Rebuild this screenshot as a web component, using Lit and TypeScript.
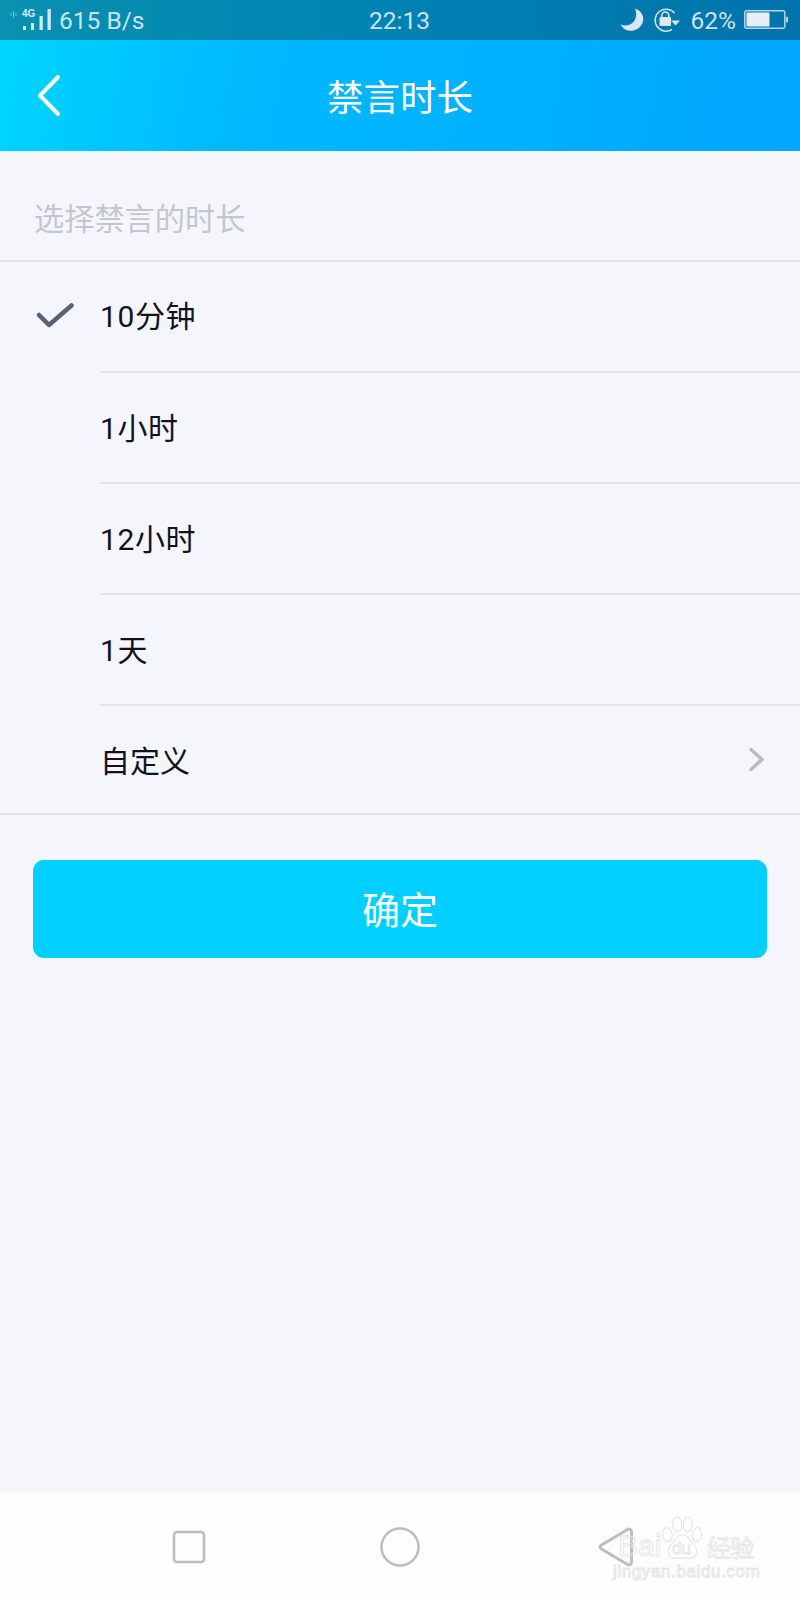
import { LitElement, css, html, svg } from "lit";
import { customElement } from "lit/decorators.js";

const OPTIONS = ["10分钟", "1小时", "12小时", "1天", "自定义"];

@customElement("app-root")
export class AppRoot extends LitElement {
  static styles = css`
    :host {
      display: block;
      width: 800px;
      height: 1600px;
      position: relative;
      overflow: hidden;
      font-family: "Roboto", "Noto Sans CJK SC", sans-serif;
      background: #f4f6fb;
    }
    .page {
      display: flex;
      flex-direction: column;
      height: 1600px;
    }
    .status {
      height: 40px;
      flex: none;
      display: flex;
      align-items: center;
      justify-content: space-between;
      background: linear-gradient(90deg, #0a90b0 0%, #0083b3 45%, #0073ac 100%);
      color: #c9e4ef;
      font-size: 24.5px;
      padding: 0 12px 0 10px;
      box-sizing: border-box;
      position: relative;
    }
    .status .left,
    .status .right {
      display: flex;
      align-items: center;
    }
    .speed {
      margin-left: 5px;
    }
    .clock {
      position: absolute;
      left: 369px;
      top: 7px;
      line-height: 27px;
    }
    .pct {
      margin: 0 8px 0 10px;
    }
    .header {
      height: 111px;
      flex: none;
      display: flex;
      align-items: center;
      justify-content: center;
      background: linear-gradient(100deg, #00d5ff 0%, #00b9ff 30%, #00a6ff 100%);
      color: #fff;
      font-size: 36.5px;
      position: relative;
    }
    .header svg {
      position: absolute;
      left: 36px;
      top: 34px;
    }
    .hint {
      height: 111px;
      flex: none;
      box-sizing: border-box;
      padding: 47px 0 0 34px;
      font-size: 30.2px;
      line-height: 44px;
      color: #c3c6cc;
      border-bottom: 2px solid #e1e3e8;
    }
    .list {
      flex: none;
      border-bottom: 2px solid #dfe1e6;
    }
    .row {
      height: 111px;
      box-sizing: border-box;
      display: flex;
    }
    .row .mark {
      width: 100px;
      flex: none;
      display: flex;
      align-items: center;
      padding: 0 0 4px 36px;
      box-sizing: border-box;
    }
    .row .body {
      flex: 1;
      display: flex;
      align-items: center;
      justify-content: space-between;
      padding-right: 34px;
      font-size: 30px;
      color: #10131f;
      border-bottom: 2px solid #e1e3e8;
    }
    .row .label {
      padding-bottom: 3px;
    }
    .row:first-child .label {
      padding-bottom: 5px;
    }
    .row .label.num {
      letter-spacing: 0.6px;
    }
    .row:last-child {
      height: 107px;
    }
    .row:last-child .label {
      padding-bottom: 1px;
    }
    .row:last-child .body {
      border-bottom: none;
    }
    .btn {
      flex: none;
      margin: 45px 33px 0;
      height: 98px;
      padding-bottom: 4px;
      box-sizing: border-box;
      border-radius: 11px;
      background: #00cfff;
      color: #fff;
      font-size: 38px;
      display: flex;
      align-items: center;
      justify-content: center;
    }
    .spacer {
      flex: 1;
    }
    .nav {
      height: 107px;
      flex: none;
      background: #fdfdfd;
      display: flex;
      align-items: center;
      gap: 174px;
      padding-left: 172px;
      box-sizing: border-box;
    }
    .nav .back {
      margin-left: 4px;
    }
    .watermark {
      position: absolute;
      left: 612px;
      top: 1512px;
      width: 188px;
      height: 88px;
      color: transparent;
      -webkit-text-stroke: 0.8px #e2e2e2;
    }
    .watermark span {
      position: absolute;
      white-space: nowrap;
    }
    .wm-bai {
      left: 6px;
      top: 17px;
      font: 400 30px "Liberation Sans", sans-serif;
    }
    .wm-du {
      left: 60px;
      top: 27px;
      font: 400 17px "Liberation Sans", sans-serif;
    }
    .wm-cn {
      left: 95px;
      top: 18px;
      font: 400 24px/34px "Noto Sans CJK SC", sans-serif;
      letter-spacing: -1px;
    }
    .wm-url {
      left: 1px;
      top: 50px;
      font: 400 17px "Liberation Sans", sans-serif;
      letter-spacing: 0.6px;
    }
    .wm-paw {
      position: absolute;
      left: 50px;
      top: 3px;
    }
  `;

  signalIcon() {
    return html`<svg width="44" height="32" viewBox="0 0 44 32">
      <path d="M1 9v3M3.500 7v7M6 9v3" stroke="#7fc0cf" stroke-width="1" fill="none" />
      <text x="12" y="13" font-size="10" font-weight="700" font-family="Liberation Sans" fill="#d3e9f1">4G</text>
      <g fill="#d3e9f1">
        <rect x="13" y="22" width="3" height="4" />
        <rect x="21" y="19" width="3" height="7" />
        <rect x="29.500" y="12" width="3.300" height="14" />
        <rect x="37.500" y="5" width="3.300" height="21" />
      </g>
    </svg>`;
  }

  statusIcons() {
    return html`<svg width="24" height="28" viewBox="0 0 24 28">
        <path d="M15 2.500C21.500 5 24 10 23 15C21.500 22 14.500 26 8 24.500C4.500 23.700 2 21.500 0.500 18.500C4.500 20 9.500 20 13 16.500C16.800 12.700 17 7 15 2.500Z" fill="#dce8f0" />
      </svg>
      <svg width="28" height="28" viewBox="0 0 28 28" style="margin-left:9px">
        <path d="M19 23.500A11 11 0 1 1 21.500 7" fill="none" stroke="#cfe4ee" stroke-width="1.500" />
        <path d="M18 14.500h9l-4.500 5z" fill="#cfe4ee" />
        <rect x="6.500" y="11" width="11.500" height="9" rx="1" fill="#dce8f0" />
        <path d="M8.800 11V9.500a3.500 3.500 0 0 1 7 0V11" fill="none" stroke="#dce8f0" stroke-width="1.600" />
      </svg>`;
  }

  battery() {
    return html`<svg width="44" height="22" viewBox="0 0 44 22">
      <rect x="0.800" y="1.800" width="40" height="17.500" rx="2" fill="none" stroke="#b5d5e4" stroke-width="1.500" />
      <rect x="2.500" y="3.500" width="23" height="14" fill="#e6f0f6" />
      <rect x="42" y="7.500" width="2" height="6" rx="1" fill="#b5d5e4" />
    </svg>`;
  }

  paw() {
    return svg`<g fill="#fff" stroke="#e2e2e2" stroke-width="1.200">
      <ellipse cx="7" cy="21" rx="6" ry="7.500" transform="rotate(-20 7 21)" />
      <ellipse cx="20" cy="10" rx="6" ry="8" transform="rotate(-8 20 10)" />
      <ellipse cx="34" cy="10" rx="6" ry="8" transform="rotate(8 34 10)" />
      <ellipse cx="46" cy="21" rx="6" ry="7.500" transform="rotate(20 46 21)" />
      <path d="M27 21C35 21 38 29 43 33C48 38 45 46 38 46H16C9 46 6 38 11 33C16 29 19 21 27 21Z" />
    </g>`;
  }

  render() {
    return html`
      <div class="page">
        <div class="status">
          <div class="left">${this.signalIcon()}<span class="speed">615 B/s</span></div>
          <div class="clock">22:13</div>
          <div class="right">${this.statusIcons()}<span class="pct">62%</span>${this.battery()}</div>
        </div>
        <div class="header">
          <svg width="26" height="44" viewBox="0 0 26 44">
            <path d="M22 3L4 21.500L22 40" fill="none" stroke="#fff" stroke-width="4" stroke-linecap="round" stroke-linejoin="round" />
          </svg>
          禁言时长
        </div>
        <div class="hint">选择禁言的时长</div>
        <div class="list">
          ${OPTIONS.map(
            (o, i) => html`<div class="row">
              <div class="mark">
                ${i === 0
                  ? html`<svg width="40" height="30" viewBox="0 0 40 30">
                      <path d="M3 14L13 24L35.500 4.500" fill="none" stroke="#5b6178" stroke-width="4.500" stroke-linecap="round" stroke-linejoin="round" />
                    </svg>`
                  : ""}
              </div>
              <div class="body">
                <span class="label ${/\d/.test(o) ? "num" : ""}">${o}</span>
                ${o === "自定义"
                  ? html`<svg width="18" height="27" viewBox="0 0 18 27">
                      <path d="M3 3.500L14 13.500L3 23.500" fill="none" stroke="#b8bac4" stroke-width="3.500" stroke-linecap="round" stroke-linejoin="round" />
                    </svg>`
                  : ""}
              </div>
            </div>`
          )}
        </div>
        <div class="btn">确定</div>
        <div class="spacer"></div>
        <div class="nav">
          <svg width="34" height="34" viewBox="0 0 34 34">
            <rect x="2" y="2" width="30" height="30" rx="3" fill="none" stroke="#bdbdbd" stroke-width="2.500" />
          </svg>
          <svg width="40" height="40" viewBox="0 0 40 40">
            <circle cx="20" cy="20" r="18.500" fill="none" stroke="#bdbdbd" stroke-width="2.500" />
          </svg>
          <svg class="back" width="36" height="40" viewBox="0 0 36 40">
            <path d="M33.500 5L33.500 35C33.500 37.500 31.500 38.500 29.500 37.500L3.500 22C1.500 20.800 1.500 19.200 3.500 18L29.500 2.500C31.500 1.500 33.500 2.500 33.500 5Z" fill="none" stroke="#bdbdbd" stroke-width="3" />
          </svg>
        </div>
      </div>
      <div class="watermark">
        <svg class="wm-paw" width="41" height="45" viewBox="0 0 54 48" preserveAspectRatio="none">${this.paw()}</svg>
        <span class="wm-bai">Bai</span>
        <span class="wm-du">du</span>
        <span class="wm-cn">经验</span>
        <span class="wm-url">jingyan.baidu.com</span>
      </div>
    `;
  }
}
